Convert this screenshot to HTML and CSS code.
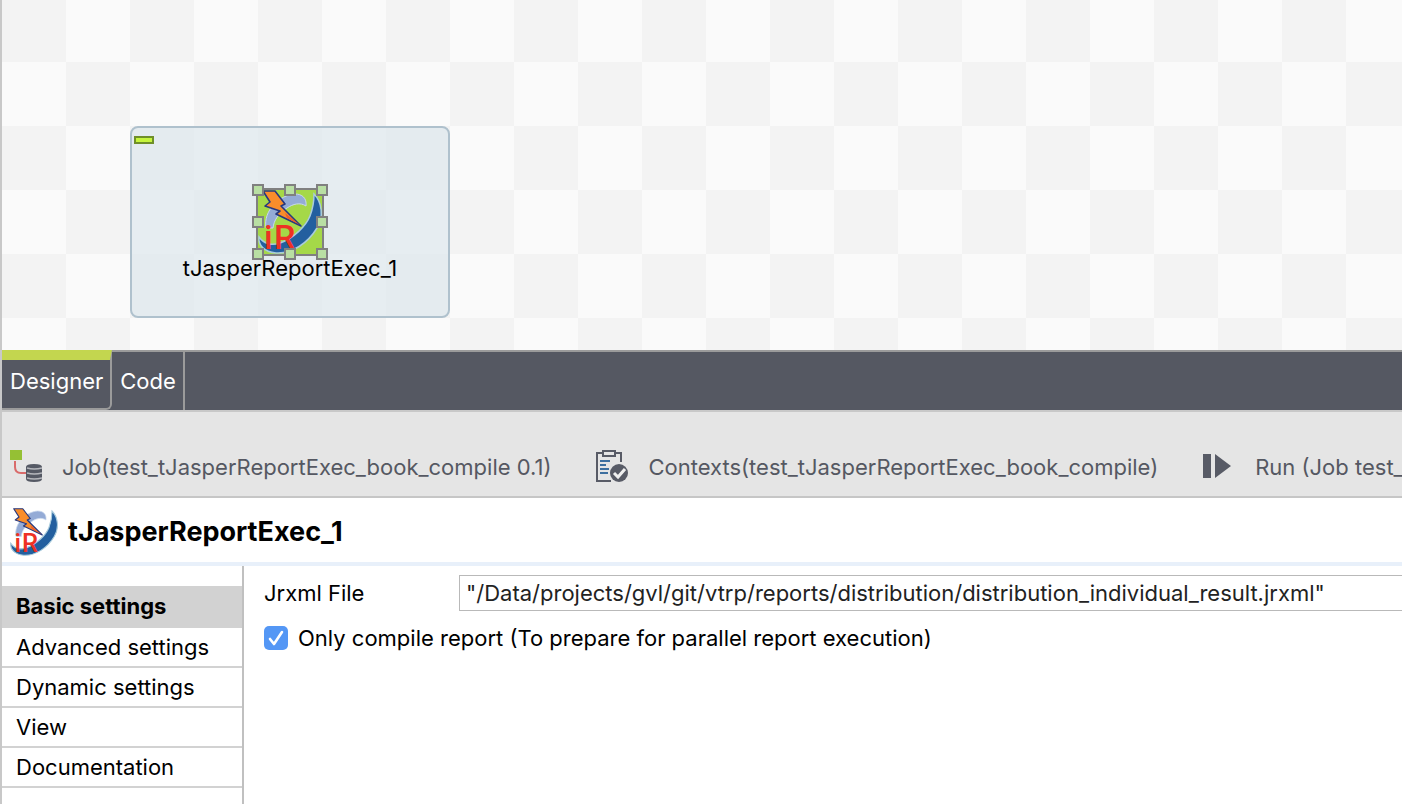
FILE: index.html
```html
<!DOCTYPE html>
<html lang="en">
<head>
<meta charset="utf-8">
<title>tJasperReportExec_1</title>
<link rel="stylesheet" href="styles.css">
</head>
<body>
<main class="app">
  <section class="canvas" aria-label="Job canvas">
    <div class="subjob">
      <button class="collapse" aria-label="Collapse"></button>
      <svg class="node" viewBox="0 0 76 76" role="img" aria-label="tJasperReportExec">
        <rect x="5" y="5" width="66" height="66" fill="#a5d848" stroke="#808080" stroke-width="2"/>
        <g id="ireport" transform="translate(6 6)">
          <path d="M8 38C5 21 21 5 37 4C44 4 49 8 48 16C42 12 35 14 29 18C20 24 16 30 15 38Z" fill="#94abd6" stroke="#c9d8ee" stroke-width="1"/>
          <path d="M56 4C64 12 66 27 59 38C50 53 34 64 18 63C6 62 0 55 1 47C6 54 14 56 22 53C36 48 48 36 52 26C55 18 56 12 56 4Z" fill="#235f9f" stroke="#a9cbdc" stroke-width="1.5"/>
          <path d="M5 1H17L27 14L23 16L43 36L18 24L22 21L7 16L12 12Z" fill="#f98d2b" stroke="#27387f" stroke-width="1.6" stroke-linejoin="round"/>
          <path d="M27 23L42 35L29 28Z" fill="#ee5a2a"/>
          <text class="logo-text" x="6 16" y="59">iR</text>
        </g>
        <g fill="#b9dfa3" stroke="#808080" stroke-width="2">
          <rect x="1" y="1" width="10" height="10"/><rect x="33" y="1" width="10" height="10"/><rect x="65" y="1" width="10" height="10"/>
          <rect x="1" y="33" width="10" height="10"/><rect x="65" y="33" width="10" height="10"/>
          <rect x="1" y="65" width="10" height="10"/><rect x="33" y="65" width="10" height="10"/><rect x="65" y="65" width="10" height="10"/>
        </g>
      </svg>
      <span class="node-label">tJasperReportExec_1</span>
    </div>
  </section>

  <nav class="editor-tabs">
    <button class="editor-tab active">Designer</button>
    <button class="editor-tab">Code</button>
  </nav>

  <nav class="view-tabs">
    <button class="view-tab">
      <svg class="view-icon" viewBox="0 0 34 34">
        <path d="M5 11V17Q5 23 11 23H17" fill="none" stroke="#d96b6b" stroke-width="2"/>
        <rect width="12" height="10" fill="#95c034"/>
        <path d="M16 17Q16 14 24 14T32 17V29Q32 32 24 32T16 29Z" fill="#555964"/>
        <path d="M17 18Q24 20 32 18M17 23Q24 25 32 23M17 28Q24 30 32 28" fill="none" stroke="#b5b7bc" stroke-width="1.5"/>
      </svg>
      <span>Job(test_tJasperReportExec_book_compile 0.1)</span>
    </button>
    <button class="view-tab">
      <svg class="view-icon" viewBox="0 0 34 34">
        <path d="M7 3H1V31H15M20 3H25V12" fill="none" stroke="#585b66" stroke-width="2"/>
        <rect x="7" y="1" width="12" height="5" fill="#e5e5e5" stroke="#585b66" stroke-width="2"/>
        <path d="M4 11H14M4 15H10M4 19H13M4 23H12" stroke="#3d6f9f" stroke-width="2"/>
        <circle cx="23" cy="23" r="9" fill="#585b66"/>
        <path d="M18 23L22 27L29 19" fill="none" stroke="#f0f0f0" stroke-width="3"/>
      </svg>
      <span>Contexts(test_tJasperReportExec_book_compile)</span>
    </button>
    <button class="view-tab">
      <svg class="view-icon" viewBox="0 0 34 34">
        <path d="M0 4H8V28H0ZM12 4L28 16L12 28Z" fill="#585b66"/>
      </svg>
      <span>Run (Job test_</span>
    </button>
  </nav>

  <header class="title-bar">
    <svg class="title-icon" viewBox="6 6 64 64" aria-hidden="true"><use href="#ireport"/></svg>
    <h1 class="title">tJasperReportExec_1</h1>
  </header>

  <div class="settings">
    <nav class="side">
      <button class="side-item selected">Basic settings</button>
      <button class="side-item">Advanced settings</button>
      <button class="side-item">Dynamic settings</button>
      <button class="side-item">View</button>
      <button class="side-item">Documentation</button>
    </nav>
    <form class="form">
      <div class="field">
        <label class="field-label" for="jrxml">Jrxml File</label>
        <input class="field-input" id="jrxml" type="text" value="&quot;/Data/projects/gvl/git/vtrp/reports/distribution/distribution_individual_result.jrxml&quot;">
      </div>
      <div class="check-row">
        <span class="check-box">
          <input class="check" id="compile" type="checkbox" checked>
          <svg class="tick" viewBox="0 0 24 24"><path d="M6 13L10 18L18 6" fill="none" stroke="#fff" stroke-width="2.6" stroke-linecap="round" stroke-linejoin="round"/></svg>
        </span>
        <label for="compile">Only compile report (To prepare for parallel report execution)</label>
      </div>
    </form>
  </div>
</main>
</body>
</html>
```
FILE: styles.css
```css
* { box-sizing: border-box; }
body {
  margin: 0;
  font: 22px/28px Inter, "Liberation Sans", sans-serif;
  color: #000;
  background: #fff;
}
button, input { font: inherit; color: inherit; }
button { border: 0; margin: 0; padding: 0; background: none; text-align: left; white-space: nowrap; }
.logo-text { font: 500 34px Roboto, sans-serif; fill: #ee3124; }

.app {
  display: flex;
  flex-direction: column;
  min-height: 100vh;
  border-left: 2px solid #c8c8c8;
  overflow: hidden;
}

.canvas {
  position: relative;
  height: 350px;
  background: repeating-conic-gradient(#fafafa 0 25%, #f3f3f3 0 50%) 0 -2px / 128px 128px;
}
.subjob {
  position: absolute;
  left: 128px;
  top: 126px;
  width: 320px;
  height: 192px;
  padding-top: 56px;
  display: flex;
  flex-direction: column;
  align-items: center;
  border: 2px solid #afc1cd;
  border-radius: 8px;
  background: rgba(220, 230, 237, 0.65);
}
.collapse {
  position: absolute;
  left: 2px;
  top: 8px;
  width: 20px;
  height: 8px;
  border: 2px solid #6f8f2a;
  background: #c6f53c;
}
.node { width: 76px; height: 76px; }
.node-label { margin-top: -6px; }

.editor-tabs {
  display: flex;
  height: 62px;
  background: #555862;
  color: #fff;
  border-top: 2px solid #9b9b9b;
  border-bottom: 2px solid #c8c8c8;
}
.editor-tab { padding: 0 7px 0 8px; border-right: 2px solid #9b9b9b; }
.editor-tab.active {
  margin-top: -2px;
  border-top: 10px solid #c3d64f;
  border-bottom: 2px solid #9b9b9b;
  border-bottom-right-radius: 6px;
  padding-bottom: 6px;
}

.view-tabs {
  display: flex;
  height: 86px;
  padding: 26px 0 0 8px;
  gap: 45px;
  background: #e5e5e5;
  border-bottom: 2px solid #c6c6c6;
  color: #555862;
}
.view-tab { display: flex; flex: none; align-items: center; height: 58px; gap: 18px; }
.view-icon { width: 34px; height: 34px; flex: none; }

.title-bar {
  display: flex;
  align-items: center;
  height: 68px;
  padding: 4px 0 0 8px;
  gap: 10px;
  border-bottom: 4px solid #e8f0fa;
}
.title-icon { width: 48px; height: 48px; }
.title { margin: 0; font-size: 27px; line-height: 32px; font-weight: 700; }

.settings { display: flex; flex: 1; }
.side {
  display: flex;
  flex-direction: column;
  flex: none;
  width: 242px;
  padding-top: 20px;
  border-right: 2px solid #c0c0c0;
}
.side-item { height: 40px; padding-left: 14px; border-bottom: 2px solid #d2d2d2; }
.side-item.selected { height: 42px; background: #d2d2d2; font-weight: 700; }

.form { flex: 1; min-width: 0; padding: 9px 0 0 20px; }
.field { display: flex; align-items: center; }
.field-label { width: 195px; flex: none; }
.field-input {
  flex: 1;
  min-width: 0;
  height: 36px;
  padding: 0 6px;
  border: 1px solid #b9b9b9;
  border-right: 0;
  background: #fff;
  color: #222;
}
.check-row { display: flex; align-items: center; gap: 10px; margin-top: 13px; }
.check-box { position: relative; display: flex; }
.check { appearance: none; width: 24px; height: 24px; margin: 0; border-radius: 5px; background: #5497f5; }
.tick { position: absolute; inset: 0; width: 24px; height: 24px; pointer-events: none; }
```
